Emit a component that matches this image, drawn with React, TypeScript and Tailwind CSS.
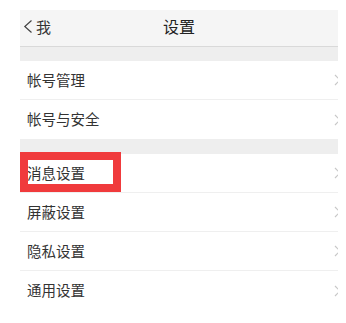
const groups: string[][] = [
    ['帐号管理', '帐号与安全'],
    ['消息设置', '屏蔽设置', '隐私设置', '通用设置'],
];

const Chevron = () => (
    <svg
        width="8"
        height="12"
        viewBox="0 0 8 12"
        className="-mr-[4px] shrink-0"
        fill="none"
        stroke="#c8c8c8"
        strokeWidth="1.2"
    >
        <path d="M1 1l5 5-5 5" />
    </svg>
);

const Row = ({ label, last }: { label: string; last: boolean }) => (
    <div
        className={`flex h-[39px] items-center justify-between pl-[7px] ${
            last ? '' : 'border-b border-[#efefef]'
        }`}
    >
        <span className="text-[14.5px] leading-none text-[#333]">{label}</span>
        <Chevron />
    </div>
);

export default function App() {
    return (
        <div
            className="relative min-h-[323px] bg-white pl-[20px] pt-[10px]"
            style={{ fontFamily: '"Noto Sans CJK SC", "Noto Sans", sans-serif' }}
        >
            <div className="w-[318px] overflow-hidden">
                <div className="relative flex h-[37px] items-center justify-center border-b border-[#d9d9d9] bg-[#f5f5f5] pb-[4px]">
                    <div className="absolute left-[3px] top-0 flex h-full items-center gap-[3px] pb-[3px]">
                        <svg
                            width="10"
                            height="15"
                            viewBox="0 0 10 15"
                            fill="none"
                            stroke="#444"
                            strokeWidth="1.2"
                        >
                            <path d="M8.5 1.5L1.8 7.5l6.7 6" />
                        </svg>
                        <span className="text-[15px] leading-none text-[#333]">我</span>
                    </div>
                    <span className="text-[16px] leading-none text-[#222]">设置</span>
                </div>
                {groups.map((items, gi) => (
                    <div key={gi}>
                        <div className={`${gi === 0 ? 'h-[14px]' : 'h-[15px]'} bg-[#eeeeee]`} />
                        <div className="bg-white">
                            {items.map((label, i) => (
                                <Row
                                    key={label}
                                    label={label}
                                    last={i === items.length - 1}
                                />
                            ))}
                        </div>
                    </div>
                ))}
            </div>
            <div className="pointer-events-none absolute left-[20px] top-[152px] h-[40px] w-[101px] border-[8px] border-[#f03a3c]" />
        </div>
    );
}
